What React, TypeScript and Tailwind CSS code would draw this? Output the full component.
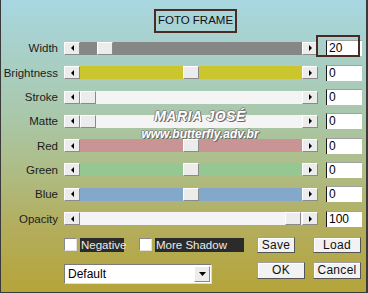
type Row = { label: string; value: string; track: string; thumb: number };

const rows: Row[] = [
  { label: "Width", value: "20", track: "bg-[#868686]", thumb: 17 },
  { label: "Brightness", value: "0", track: "bg-[#cbc62e]", thumb: 103 },
  { label: "Stroke", value: "0", track: "bg-[#f4f4f4]", thumb: 0 },
  { label: "Matte", value: "0", track: "bg-[#f4f4f4]", thumb: 0 },
  { label: "Red", value: "0", track: "bg-[#c99494]", thumb: 103 },
  { label: "Green", value: "0", track: "bg-[#94c792]", thumb: 103 },
  { label: "Blue", value: "0", track: "bg-[#84a8c9]", thumb: 103 },
  { label: "Opacity", value: "100", track: "bg-[#f4f4f4]", thumb: 205 },
];

const bevel =
  "bg-[#ececec] border border-t-white border-l-white border-r-[#8a8a8a] border-b-[#8a8a8a]";

function Arrow({ dir }: { dir: "left" | "right" | "down" }) {
  const points =
    dir === "left" ? "4,0 4,6 1,3" : dir === "right" ? "1,0 1,6 4,3" : "0,1 7,1 3.5,5";
  const w = dir === "down" ? 7 : 5;
  return (
    <svg width={w} height="6" viewBox={`0 0 ${w} 6`}>
      <polygon points={points} fill="#000" />
    </svg>
  );
}

function ArrowButton({ dir }: { dir: "left" | "right" }) {
  return (
    <div className={`w-4 h-[13px] flex items-center justify-center ${bevel}`}>
      <Arrow dir={dir} />
    </div>
  );
}

function ValueBox({ value }: { value: string }) {
  return (
    <div className="ml-[8px] w-[36px] h-[16px] bg-white border-l border-t border-l-[#1a1a1a] border-t-[#a0a0a0] pl-[2px] text-[12px] leading-[15px] text-black">
      {value}
    </div>
  );
}

function Checkbox({ label, width }: { label: string; width: string }) {
  return (
    <>
      <div className="w-[13px] h-[13px] mt-[1px] bg-white border border-t-[#8a8a8a] border-l-[#8a8a8a] border-r-[#e0e0e0] border-b-[#e0e0e0]" />
      <div
        className={`ml-[3px] h-[14px] mt-[1px] bg-[#2b2b2b] text-[#ececec] text-[11.5px] leading-[14px] pl-[1px] ${width}`}
      >
        {label}
      </div>
    </>
  );
}

function Button({ label, width, height }: { label: string; width: string; height: string }) {
  return (
    <div
      className={`flex items-center justify-center bg-[#f2f2f2] border border-[#a0a0a0] border-r-[#555] border-b-[#555] shadow-[inset_1px_1px_0_#fff] text-[12px] tracking-[0.3px] text-[#111] ${width} ${height}`}
    >
      {label}
    </div>
  );
}

export default function App() {
  return (
    <div className="relative w-[368px] h-[293px] overflow-hidden border-l border-r-2 border-b border-[#3a3a3a] bg-[linear-gradient(180deg,#a8d7e1_0%,#a9c8ad_38%,#adbf8c_55%,#b3ad5c_78%,#b5a43a_100%)] font-['Liberation_Sans',Arial,sans-serif] text-[#1c1c1c]">
      <div className="pl-[153px] pt-[9px]">
        <div className="w-[83px] h-[24px] border-2 border-[#4a2a22] flex items-center justify-center text-[11.5px] text-[#111]">
          FOTO FRAME
        </div>
      </div>

      <div className="mt-[3.35px]">
        {rows.map((r) => (
          <div key={r.label} className="h-[24.3px] flex items-center">
            <div className="w-[57px] text-right text-[11.5px] leading-[14px]">{r.label}</div>
            <div className="ml-[6px] flex">
              <ArrowButton dir="left" />
              <div className={`relative w-[222px] h-[13px] ${r.track}`}>
                <div
                  className={`absolute top-0 w-4 h-[13px] ${bevel}`}
                  style={{ left: r.thumb }}
                />
              </div>
              <ArrowButton dir="right" />
            </div>
            <ValueBox value={r.value} />
          </div>
        ))}
      </div>

      <div className="mt-[6.25px] pl-[63px] flex items-start h-[17px]">
        <Checkbox label="Negative" width="w-[44px]" />
        <div className="ml-[15px] flex items-start">
          <Checkbox label="More Shadow" width="w-[89px]" />
        </div>
        <div className="ml-[13px]">
          <Button label="Save" width="w-[38px]" height="h-[16px]" />
        </div>
        <div className="ml-[18px]">
          <Button label="Load" width="w-[48px]" height="h-[16px]" />
        </div>
      </div>

      <div className="mt-[8px] pl-[63px] flex items-start">
        <div className="mt-[2px] w-[148px] h-[20px] bg-white border border-t-[#7a7a7a] border-l-[#7a7a7a] border-r-[#dcdcdc] border-b-[#dcdcdc] flex items-center justify-between">
          <span className="pl-[3px] text-[12px] text-black">Default</span>
          <div className={`mr-[1px] w-[16px] h-[16px] flex items-center justify-center ${bevel}`}>
            <Arrow dir="down" />
          </div>
        </div>
        <div className="ml-[45px]">
          <Button label="OK" width="w-[48px]" height="h-[17px]" />
        </div>
        <div className="ml-[8px]">
          <Button label="Cancel" width="w-[48px]" height="h-[17px]" />
        </div>
      </div>

      <div className="absolute left-[315px] top-[35px] w-[44px] h-[22px] border-2 border-[#4a2a22]" />

      <div className="absolute left-[139px] top-[109px] w-[120px] text-center italic font-bold text-white leading-none">
        <div className="text-[14px] tracking-[0.5px] [text-shadow:1px_1px_0_#6a6a6a,-1px_0_0_#8a8a8a,0_-1px_0_#8a8a8a,1px_0_0_#8a8a8a]">
          MARIA JOSÉ
        </div>
        <div className="mt-[5px] text-[12px] [text-shadow:1px_1px_0_#6a6a6a,-1px_0_0_#8a8a8a,0_-1px_0_#8a8a8a,1px_0_0_#8a8a8a]">
          www.butterfly.adv.br
        </div>
      </div>
    </div>
  );
}
